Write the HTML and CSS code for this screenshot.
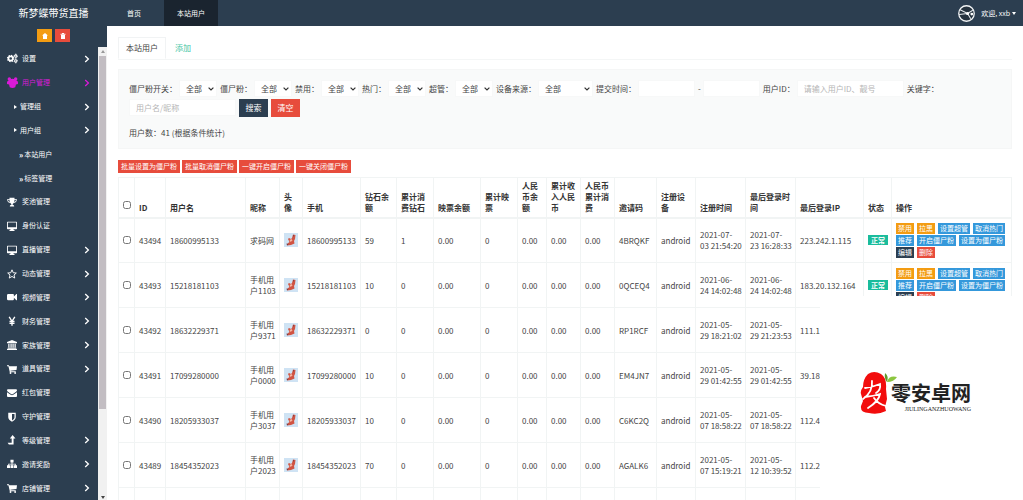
FILE: index.html
```html
<!DOCTYPE html>
<html lang="zh-CN">
<head>
<meta charset="utf-8">
<title>本站用户</title>
<link rel="stylesheet" href="styles.css">
</head>
<body>
<svg class="defs" aria-hidden="true">
  <symbol id="chev" viewBox="0 0 6 8"><path d="M1.2 1 4.4 4 1.2 7" fill="none" stroke="currentColor" stroke-width="1.3"/></symbol>
  <symbol id="gears" viewBox="0 0 18 16"><circle cx="6" cy="8" r="3.6" fill="none" stroke="currentColor" stroke-width="2.8"/><circle cx="6" cy="8" r="5.2" fill="none" stroke="currentColor" stroke-width="1.8" stroke-dasharray="2.2 1.88"/><circle cx="14.4" cy="4" r="1.9" fill="none" stroke="currentColor" stroke-width="1.8"/><circle cx="14.4" cy="12" r="1.9" fill="none" stroke="currentColor" stroke-width="1.8"/><path d="M14.4 0v2M14.4 6v4M14.4 14v2M11 3h1M17 5h1M11 13h1M17 11h1" stroke="currentColor" stroke-width="1.4"/></symbol>
  <symbol id="bear" viewBox="0 0 16 16"><g fill="currentColor"><circle cx="3.400" cy="3" r="2.500"/><circle cx="12.600" cy="3" r="2.500"/><path d="M4 3.500q4-2 8 0L16 7v3l-3 1-1 4q-4 2-8 0l-1-4-3-1V7z"/></g></symbol>
  <symbol id="trophy" viewBox="0 0 16 16"><path fill="currentColor" d="M4 1h8v2h3.5v2c0 2.500-2 4-4.500 4.300-.6.900-1.300 1.400-2 1.700v1.500c1.500.2 2.500 1 2.500 2.500h-7c0-1.500 1-2.300 2.500-2.500V11c-.7-.3-1.400-.8-2-1.700C2.500 9 .5 7.500.5 5V3H4zM4 4.200H1.800V5c0 1.200 1 2.400 2.700 2.900C4.200 6.900 4 5.600 4 4.200zm8 0c0 1.400-.2 2.700-.5 3.700 1.700-.5 2.700-1.700 2.700-2.900v-.8z"/></symbol>
  <symbol id="screen" viewBox="0 0 16 16"><path fill="currentColor" fill-rule="evenodd" d="M1 1h14q1 0 1 1v10q0 1-1 1h-4.500v1.200H12V16H4v-1.800h1.500V13H1q-1 0-1-1V2q0-1 1-1zm.4 1.500v7.300h13.200V2.500z"/></symbol>
  <symbol id="star" viewBox="0 0 16 16"><path fill="none" stroke="currentColor" stroke-width="1.500" stroke-linejoin="round" d="M8 1.300 10 6l4.900.4-3.700 3.200 1.200 4.900L8 11.900l-4.400 2.600 1.200-4.900L1.100 6.400 6 6z"/></symbol>
  <symbol id="video" viewBox="0 0 16 16"><path fill="currentColor" d="M2 3h7.500q1.500 0 1.500 1.500V7l4-4h1v10h-1l-4-4v2.500Q11 13 9.500 13H2Q0 13 0 11V5q0-2 2-2z"/></symbol>
  <symbol id="yen" viewBox="0 0 16 16"><path fill="none" stroke="currentColor" stroke-width="2.200" d="m3.500 1.500 4.500 7 4.500-7M8 8v7.500M4 8.500h8M4 11.500h8"/></symbol>
  <symbol id="bank" viewBox="0 0 16 16"><path fill="currentColor" d="M8 0 16 3.200V5H0V3.200zM2 6h2v6H2zm3.500 0h2v6h-2zM8.700 6h2v6h-2zM12 6h2v6h-2zM1 12.500h14V14H1zM0 14.500h16V16H0z"/></symbol>
  <symbol id="cart" viewBox="0 0 16 16"><g fill="currentColor"><path d="M0 2h3l.6 1.500H16l-.8 6L5.500 10.600l.3 1H14V13H4.500L2.300 3.400H0z"/><circle cx="5.600" cy="14.400" r="1.500"/><circle cx="13" cy="14.400" r="1.500"/></g></symbol>
  <symbol id="mail" viewBox="0 0 16 16"><path fill="currentColor" d="M1.500 2h13Q16 2 16 3.500q0 1.500-1.500 2.500L9 9.800q-1 .6-2 0L1.500 6Q0 5 0 3.700 0 2 1.500 2zM0 6.700l6 4.100q2 1.200 4 0l6-4.100v6q0 1.500-1.500 1.500h-13Q0 14.200 0 12.700z"/></symbol>
  <symbol id="shield" viewBox="0 0 16 16"><path fill="currentColor" fill-rule="evenodd" d="M2 1h12v7.500c0 3-2.500 5.500-6 7.200-3.500-1.700-6-4.200-6-7.200zm6 2v10.500c2.400-1.400 4-3 4-5V3z"/></symbol>
  <symbol id="level" viewBox="0 0 16 16"><path fill="currentColor" d="M9 0l4.500 5.500h-3V15H3l-2-2.500h6.500v-7h-3z"/></symbol>
  <symbol id="tree" viewBox="0 0 16 16"><path fill="currentColor" d="M5.500 1h5v4.500H8.700V7.500H14V10h2v4.500h-4.800V10h1.500V8.800h-4V10h1.700v4.500H5.600V10h1.700V8.800h-4V10h1.500v4.500H0V10h2V7.500h5.300v-2H5.500z"/></symbol>
  <symbol id="face" viewBox="0 0 14 14"><path fill="#cfe3f4" d="M0 0h14v14H0z"/><path fill="#d05443" d="M9 1.500 11.500 2 11 6l-1 2 .5 2.500L7 12l-4 .5.500-2L5.500 9 4 6l1-1 2 1 1-1z"/><path fill="#f4b6a4" d="m5.500 7 2-1 1 1.500-2 1.500z"/><path fill="#6b3944" d="m2.500 10.500 2 .5-1.500 1.500zM9 2l1 .5-1 1.500z"/></symbol>
</svg>

<aside class="side">
  <h1 class="brand">新梦蝶带货直播</h1>
  <div class="quick">
    <button class="sq orange" type="button" aria-label="首页"><svg viewBox="0 0 6 6"><path fill="#fff" d="M3 0l3 2.500H5V6H1V2.500H0z"/></svg></button>
    <button class="sq red" type="button" aria-label="清除"><svg viewBox="0 0 6 6"><path fill="#fff" d="M2 0h2v.7h1.500v1H.5v-1H2zM1 2h4v4H1z"/></svg></button>
  </div>
  <nav class="menu-wrap">
    <ul class="menu">
      <li><a href="#"><svg class="ic wide"><use href="#gears"/></svg><span>设置</span><svg class="ch"><use href="#chev"/></svg></a></li>
      <li class="on"><a href="#"><svg class="ic wide"><use href="#bear"/></svg><span>用户管理</span><svg class="ch"><use href="#chev"/></svg></a></li>
      <li class="sub"><a href="#"><i class="tri"></i><span>管理组</span><svg class="ch"><use href="#chev"/></svg></a></li>
      <li class="sub"><a href="#"><i class="tri"></i><span>用户组</span><svg class="ch"><use href="#chev"/></svg></a></li>
      <li class="leaf"><a href="#"><b>»</b><span>本站用户</span></a></li>
      <li class="leaf"><a href="#"><b>»</b><span>标签管理</span></a></li>
      <li><a href="#"><svg class="ic"><use href="#trophy"/></svg><span>奖池管理</span></a></li>
      <li><a href="#"><svg class="ic"><use href="#screen"/></svg><span>身份认证</span></a></li>
      <li><a href="#"><svg class="ic"><use href="#screen"/></svg><span>直播管理</span><svg class="ch"><use href="#chev"/></svg></a></li>
      <li><a href="#"><svg class="ic"><use href="#star"/></svg><span>动态管理</span><svg class="ch"><use href="#chev"/></svg></a></li>
      <li><a href="#"><svg class="ic"><use href="#video"/></svg><span>视频管理</span><svg class="ch"><use href="#chev"/></svg></a></li>
      <li><a href="#"><svg class="ic"><use href="#yen"/></svg><span>财务管理</span><svg class="ch"><use href="#chev"/></svg></a></li>
      <li><a href="#"><svg class="ic"><use href="#bank"/></svg><span>家族管理</span><svg class="ch"><use href="#chev"/></svg></a></li>
      <li><a href="#"><svg class="ic"><use href="#cart"/></svg><span>道具管理</span><svg class="ch"><use href="#chev"/></svg></a></li>
      <li><a href="#"><svg class="ic"><use href="#mail"/></svg><span>红包管理</span></a></li>
      <li><a href="#"><svg class="ic"><use href="#shield"/></svg><span>守护管理</span></a></li>
      <li><a href="#"><svg class="ic"><use href="#level"/></svg><span>等级管理</span><svg class="ch"><use href="#chev"/></svg></a></li>
      <li><a href="#"><svg class="ic"><use href="#tree"/></svg><span>邀请奖励</span><svg class="ch"><use href="#chev"/></svg></a></li>
      <li><a href="#"><svg class="ic"><use href="#cart"/></svg><span>店铺管理</span><svg class="ch"><use href="#chev"/></svg></a></li>
    </ul>
    <div class="bar"><i class="up"></i><div class="thumb"></div><i class="down"></i></div>
  </nav>
</aside>

<div class="right">
  <header class="top">
    <a href="#" class="tt">首页</a><a href="#" class="tt cur">本站用户</a>
    <button class="user" type="button"><svg viewBox="0 0 16 16"><circle cx="8" cy="8" r="7.300" fill="#26333f" stroke="#f2f4f5" stroke-width="1.200"/><path d="M2 4.500 9 8l5-3M9 8l3 5M1 9l8-1" fill="none" stroke="#e8ecef" stroke-width="1"/><circle cx="9" cy="8" r="1.500" fill="#fff"/><circle cx="13" cy="8.500" r="1.300" fill="#fff"/></svg><span>欢迎, xxb</span><i class="caret"></i></button>
  </header>
  <main class="main">
    <div class="tabs"><a href="#" class="tab cur">本站用户</a><a href="#" class="tab">添加</a></div>
    <form class="well">
      <div class="row">
        <label>僵尸粉开关：<select><option>全部</option></select></label>
        <label>僵尸粉：<select><option>全部</option></select></label>
        <label>禁用：<select><option>全部</option></select></label>
        <label>热门：<select><option>全部</option></select></label>
        <label>超管：<select><option>全部</option></select></label>
        <label>设备来源：<select class="dev"><option>全部</option></select></label>
        <label>提交时间：<input class="date" type="text"></label>
        <label>-<input class="date" type="text" aria-label="结束时间"></label>
        <label>用户ID：<input class="txt" type="text" placeholder="请输入用户ID、靓号"></label>
        <label for="kw">关键字：</label>
      </div>
      <div class="row kw"><input id="kw" class="txt" type="text" placeholder="用户名/昵称"><button class="go dark" type="button">搜索</button><button class="go red" type="button">清空</button></div>
      <p class="count">用户数：41 (根据条件统计)</p>
    </form>
    <div class="batch"><button class="sm red" type="button">批量设置为僵尸粉</button><button class="sm red" type="button">批量取消僵尸粉</button><button class="sm red" type="button">一键开启僵尸粉</button><button class="sm red" type="button">一键关闭僵尸粉</button></div>
    <div class="tw">
      <table>
        <colgroup><col class="w16"><col class="w31"><col class="w80"><col class="w34"><col class="w23"><col class="w58"><col class="w36"><col class="w37"><col class="w47"><col class="w37"><col class="w29"><col class="w34"><col class="w34"><col class="w42"><col class="w39"><col class="w50"><col class="w50"><col class="w68"><col class="w28"><col></colgroup>
        <thead><tr><th class="ck"><input type="checkbox" aria-label="全选"></th><th>ID</th><th>用户名</th><th>昵称</th><th>头像</th><th>手机</th><th>钻石余额</th><th>累计消费钻石</th><th>映票余额</th><th>累计映票</th><th>人民币余额</th><th>累计收入人民币</th><th>人民币累计消费</th><th>邀请码</th><th>注册设备</th><th>注册时间</th><th>最后登录时间</th><th>最后登录IP</th><th>状态</th><th>操作</th></tr></thead>
        <tbody>
          <tr><td class="ck"><input type="checkbox" aria-label="43494"></td><td>43494</td><td>18600995133</td><td>求码网</td><td><svg class="av"><use href="#face"/></svg></td><td>18600995133</td><td>59</td><td>1</td><td>0.00</td><td>0</td><td>0.00</td><td>0.00</td><td>0.00</td><td>4BRQKF</td><td>android</td><td>2021-07-<br>03 21:54:20</td><td>2021-07-<br>23 16:28:33</td><td>223.242.1.115</td><td><span class="ok">正常</span></td><td><div class="acts"><button class="orange">禁用</button><button class="orange">拉黑</button><button class="blue">设置超管</button><button class="blue">取消热门</button><button class="blue">推荐</button><button class="blue">开启僵尸粉</button><button class="blue">设置为僵尸粉</button><button class="dark">编辑</button><button class="red">删除</button></div></td></tr>
          <tr><td class="ck"><input type="checkbox" aria-label="43493"></td><td>43493</td><td>15218181103</td><td>手机用户1103</td><td><svg class="av"><use href="#face"/></svg></td><td>15218181103</td><td>10</td><td>0</td><td>0.00</td><td>0</td><td>0.00</td><td>0.00</td><td>0.00</td><td>0QCEQ4</td><td>android</td><td>2021-06-<br>24 14:02:48</td><td>2021-06-<br>24 14:02:48</td><td>183.20.132.164</td><td><span class="ok">正常</span></td><td><div class="acts"><button class="orange">禁用</button><button class="orange">拉黑</button><button class="blue">设置超管</button><button class="blue">取消热门</button><button class="blue">推荐</button><button class="blue">开启僵尸粉</button><button class="blue">设置为僵尸粉</button><button class="dark">编辑</button><button class="red">删除</button></div></td></tr>
          <tr><td class="ck"><input type="checkbox" aria-label="43492"></td><td>43492</td><td>18632229371</td><td>手机用户9371</td><td><svg class="av"><use href="#face"/></svg></td><td>18632229371</td><td>0</td><td>0</td><td>0.00</td><td>0</td><td>0.00</td><td>0.00</td><td>0.00</td><td>RP1RCF</td><td>android</td><td>2021-05-<br>29 18:21:02</td><td>2021-05-<br>29 21:23:53</td><td>111.1</td><td></td><td></td></tr>
          <tr><td class="ck"><input type="checkbox" aria-label="43491"></td><td>43491</td><td>17099280000</td><td>手机用户0000</td><td><svg class="av"><use href="#face"/></svg></td><td>17099280000</td><td>10</td><td>0</td><td>0.00</td><td>0</td><td>0.00</td><td>0.00</td><td>0.00</td><td>EM4JN7</td><td>android</td><td>2021-05-<br>29 01:42:55</td><td>2021-05-<br>29 01:42:55</td><td>39.18</td><td></td><td></td></tr>
          <tr><td class="ck"><input type="checkbox" aria-label="43490"></td><td>43490</td><td>18205933037</td><td>手机用户3037</td><td><svg class="av"><use href="#face"/></svg></td><td>18205933037</td><td>10</td><td>0</td><td>0.00</td><td>0</td><td>0.00</td><td>0.00</td><td>0.00</td><td>C6KC2Q</td><td>android</td><td>2021-05-<br>07 18:58:22</td><td>2021-05-<br>07 18:58:22</td><td>112.4</td><td></td><td></td></tr>
          <tr><td class="ck"><input type="checkbox" aria-label="43489"></td><td>43489</td><td>18454352023</td><td>手机用户2023</td><td><svg class="av"><use href="#face"/></svg></td><td>18454352023</td><td>70</td><td>0</td><td>0.00</td><td>0</td><td>0.00</td><td>0.00</td><td>0.00</td><td>AGALK6</td><td>android</td><td>2021-05-<br>07 15:19:21</td><td>2021-05-<br>12 10:39:52</td><td>112.2</td><td></td><td></td></tr>
          <tr><td></td><td></td><td></td><td></td><td></td><td></td><td></td><td></td><td></td><td></td><td></td><td></td><td></td><td></td><td></td><td></td><td></td><td></td><td></td><td></td></tr>
        </tbody>
      </table>
    </div>
  </main>
</div>

<div class="mark">
  <svg class="seal" viewBox="0 0 38 44"><path fill="#f20d0d" d="M8 3q6-4 13 0 6 4 5 15l1 10-2 8 1 4q-8 4-17 2-9 0-8-7l2-5-2-7q-1-3 2-7Q3 8 8 3z"/><path d="M5 17q8-1 15-4 1 6-4 9M12 10q1 11-9 18M5 26q9-1 15-3-1 7-12 14M14 27q4 6 12 8" fill="none" stroke="#fff" stroke-width="1.800" stroke-linecap="round"/><path fill="#8cc63f" d="M27 11q2-7 10-5-3 5-10 5z"/><path fill="#5f9a2c" d="M25 2q4 3 2 9-3-3-2-9z"/></svg>
  <div class="words"><div class="cn">零安卓网</div><div class="en">JIULINGANZHUOWANG</div></div>
</div>
</body>
</html>
```
FILE: styles.css
```css
* { box-sizing: border-box; }
body {
  margin: 0;
  height: 100vh;
  overflow: hidden;
  display: flex;
  position: relative;
  background: #fff;
  color: #444;
  font: 8px/11px "Noto Sans CJK SC", "Noto Sans", sans-serif;
}
a { color: inherit; text-decoration: none; }
button, input, select { font: inherit; color: inherit; margin: 0; border: 0; border-radius: 0; }
button { padding: 0; color: #fff; white-space: nowrap; }
svg { display: block; }
.defs { position: absolute; width: 0; height: 0; }
.orange { background: #f39c12; }
.red { background: #e74c3c; }
.blue { background: #3498db; }
.dark { background: #2c3e50; }

.side {
  width: 107px;
  flex: none;
  display: flex;
  flex-direction: column;
  background: #2c3e50;
  color: #fff;
}
.brand { margin: 0; height: 26px; font-size: 10px; line-height: 26px; font-weight: 400; text-align: center; }
.quick { display: flex; justify-content: center; gap: 3px; height: 21px; padding: 3px 0 5px; }
.sq { width: 15px; display: grid; place-items: center; }
.sq svg { width: 6px; height: 6px; }
.menu-wrap { flex: 1; min-height: 0; display: flex; }
.menu { flex: 1; margin: 0; padding: 0; list-style: none; display: flex; flex-direction: column; font-size: 7px; }
.menu li { flex: 1; }
.menu a { height: 100%; display: flex; align-items: center; padding: 0 8px 0 7px; }
.menu .on { color: #d81bd8; }
.menu span { flex: 1; }
.ic { width: 10px; height: 10px; margin-right: 5px; }
.ic.wide { width: 11px; height: 11px; margin-right: 4px; }
.ch { width: 6px; height: 8px; }
.menu .sub a { padding-left: 14px; }
.menu .leaf a { padding-left: 19px; }
.leaf b { margin-right: 1px; font-size: 8px; }
.tri { margin-right: 3px; border: 2px solid transparent; border-left: 3px solid #fff; border-right: 0; }
.bar { width: 9px; background: #f1f1f1; display: flex; flex-direction: column; align-items: center; }
.thumb { width: 7px; flex: 348; background: #c2bdc2; }
.bar::after { content: ""; flex: 86; }
.up { margin: 3px 0; border: 2px solid transparent; border-bottom: 3px solid #999; border-top: 0; }
.down { order: 2; margin-bottom: 1px; border: 2px solid transparent; border-top: 3px solid #444; border-bottom: 0; }

.right { flex: 1; min-width: 0; display: flex; flex-direction: column; }
.top { height: 26px; flex: none; display: flex; background: #2c3e50; color: #fff; font-size: 7px; line-height: 26px; padding-left: 7px; }
.tt { padding: 0 13px; width: 50px; flex: none; }
.tt.cur { width: 54px; background: #1a242f; }
.user { margin-left: auto; padding-right: 7px; background: none; display: flex; align-items: center; }
.user svg { width: 17px; height: 17px; margin-right: 6px; }
.caret { margin-left: 2px; border: 2px solid transparent; border-top: 3px solid #fff; border-bottom: 0; }

.main { flex: 1; min-height: 0; overflow: hidden; padding: 11px 11px 0; }
.tabs { display: flex; height: 23px; border-bottom: 1px solid #f4f6f6; }
.tab { padding: 5px 9px; color: #3fc5a4; }
.tab.cur { padding: 4px 7px; color: #444; border: 1px solid #f1f3f4; border-bottom-color: #fff; }
.well { margin-top: 9px; height: 80px; padding: 10px; background: #f9fafa; border: 1px solid #f5f6f6; }
.row { display: flex; align-items: center; gap: 3px; height: 17px; }
.row label { display: flex; align-items: center; gap: 2px; white-space: nowrap; }
.row + .row { margin-top: 2px; }
.well input, .well select { height: 17px; background: #fff; border: 1px solid #f7f8f8; }
.well select {
  width: 38px;
  padding: 0 6px;
  appearance: none;
  background: #fff url("data:image/svg+xml,%3Csvg xmlns='http://www.w3.org/2000/svg' viewBox='0 0 6 4'%3E%3Cpath d='M.6.6 3 3 5.400.6' fill='none' stroke='%23333' stroke-width='1.200'/%3E%3C/svg%3E") no-repeat right 2px center / 6px 4px;
}
.well .dev { width: 55px; }
.well .date { width: 57px; }
.well .txt { width: 107px; padding: 0 6px; }
.well ::placeholder { color: #b5b5b5; opacity: 1; }
.go { width: 29px; height: 18px; }
.count { margin: 11px 0 0; }
.batch { display: flex; gap: 2px; margin: 11px 0 4px; }
.sm { padding: 0 3px; height: 13px; font-size: 7px; line-height: 13px; }

table { width: 100%; table-layout: fixed; border-collapse: collapse; }
th, td { border: 1px solid #f1f4f4; text-align: left; }
th { height: 40px; padding: 0 4px 4px; vertical-align: bottom; color: #333; font-weight: 700; border-bottom: 2px solid #f1f4f4; }
td { height: 45px; padding: 0 0 0 4px; vertical-align: middle; }
.ck { padding-left: 0; padding-right: 0; }
.ck input { display: block; width: 8px; height: 8px; margin: 0 auto; }
th.ck input { margin-bottom: 4px; }
.av { width: 14px; height: 14px; }
.ok { display: block; width: 20px; background: #1abc9c; color: #fff; text-align: center; font-weight: 700; font-size: 7px; line-height: 10px; }
.acts { display: flex; flex-wrap: wrap; gap: 1px 3px; padding-right: 4px; }
.acts button { padding: 0 2px; font-size: 7px; line-height: 11px; height: 11px; }
.w16 { width: 16px; } .w31 { width: 31px; } .w80 { width: 80px; } .w34 { width: 34px; }
.w23 { width: 23px; } .w58 { width: 58px; } .w36 { width: 36px; } .w37 { width: 37px; }
.w47 { width: 47px; } .w29 { width: 29px; } .w42 { width: 42px; } .w39 { width: 39px; }
.w50 { width: 50px; } .w68 { width: 68px; } .w28 { width: 28px; }

/* site mark floating over the lower right of the list */
.mark {
  position: absolute;
  left: 820px;
  top: 296px;
  right: 0;
  bottom: 0;
  background: #fff;
  padding: 75px 0 0 40px;
  display: flex;
  align-items: flex-start;
}
.seal { width: 38px; height: 44px; margin-right: -7px; }
.words { padding-top: 10px; color: #222; }
.cn { font-size: 20px; line-height: 24px; font-weight: 700; }
.en { font: 6px/8px "Liberation Serif", serif; text-align: right; }
```
